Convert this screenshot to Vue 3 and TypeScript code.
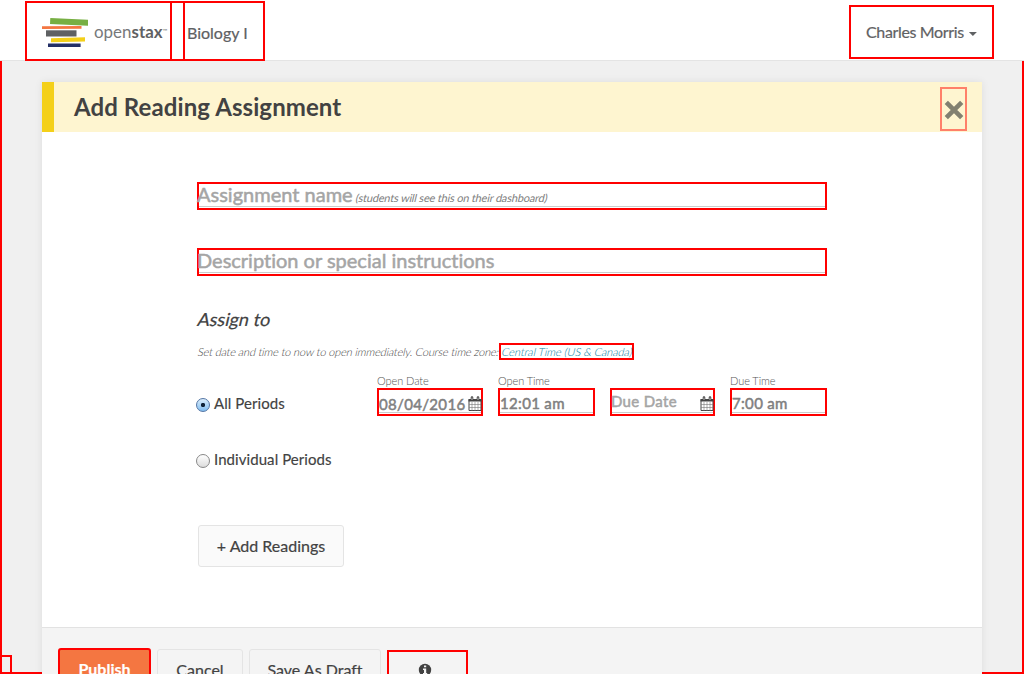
<script setup lang="ts">
interface Field {
  id: string
  label: string
  value: string
  calendar: boolean
  placeholder: boolean
}

const fields: Field[] = [
  { id: 'open-date', label: 'Open Date', value: '08/04/2016', calendar: true, placeholder: false },
  { id: 'open-time', label: 'Open Time', value: '12:01 am', calendar: false, placeholder: false },
  { id: 'due-date', label: '', value: 'Due Date', calendar: true, placeholder: true },
  { id: 'due-time', label: 'Due Time', value: '7:00 am', calendar: false, placeholder: false },
]
</script>

<template>
  <div class="app">
    <header class="navbar">
      <a class="brand outlined">
        <svg width="130" height="34" viewBox="0 0 130 34" aria-label="openstax">
          <path d="M8.300 0 46 1.800V7.800L8 6z" fill="#77af43" />
          <path d="M0 8.300 39.500 8V10.800L0 11.100z" fill="#f47641" />
          <path d="M4 12.300H34.500V18.500H4z" fill="#5f6163" />
          <path d="M9 20.300 43 19.200V23.600L9 24.300z" fill="#f4d019" />
          <path d="M6 25.400H38.600V29H6z" fill="#232f66" />
          <text x="52" y="19.500" textLength="37.500" lengthAdjust="spacingAndGlyphs" class="logo-text">open</text>
          <text x="89.500" y="19.500" textLength="31" lengthAdjust="spacingAndGlyphs" class="logo-text strong">stax</text>
          <text x="120.500" y="14.500" class="logo-tm">™</text>
        </svg>
      </a>
      <a class="course outlined"><span>Biology I</span></a>
      <a class="user outlined"><span>Charles Morris</span><i class="caret"></i></a>
    </header>

    <main class="page">
      <section class="panel">
        <div class="panel-head">
          <h1>Add Reading Assignment</h1>
          <button class="close" aria-label="Close">
            <svg width="20" height="20" viewBox="0 0 20 20">
              <path d="M2.300 2.300 17.700 17.700M17.700 2.300 2.300 17.700" stroke="#828070" stroke-width="4.600" />
            </svg>
          </button>
        </div>

        <div class="panel-body">
          <div class="text-input outlined">
            <span class="name">Assignment name</span><span class="hint slanted">(students will see this on their dashboard)</span>
          </div>
          <div class="text-input outlined second"><span class="desc">Description or special instructions</span></div>

          <h2><span class="slanted">Assign to</span></h2>
          <p class="note">
            <span class="note-text"><span class="slanted">Set date and time to now to open immediately. Course time zone:</span></span>
            <a class="zone outlined"><span class="slanted">Central Time (US &amp; Canada)</span></a>
          </p>

          <div class="period-row">
            <label class="radio all"><i class="dot checked"></i><span class="radio-text">All Periods</span></label>
            <div v-for="f in fields" :key="f.id" class="field" :class="f.id">
              <span class="field-label">{{ f.label }}</span>
              <div class="field-box outlined" :class="{ placeholder: f.placeholder }">
                <span class="value">{{ f.value }}</span>
                <svg v-if="f.calendar" class="calendar" width="14" height="16" viewBox="0 0 14 16">
                  <path d="M1 3.500H13V14.500H1z" fill="#fff" stroke="#444" />
                  <path d="M.5 3H13.500V5.500H.5z" fill="#444" />
                  <path d="M4 6V15M7 6V15M10 6V15M1 8.500H13M1 11.500H13" stroke="#777" stroke-width=".6" />
                  <path d="M4 1.500V3.500M10 1.500V3.500" stroke="#444" stroke-width="2.600" stroke-linecap="round" />
                  <path d="M4 1.500V4M10 1.500V4" stroke="#ddd" stroke-width=".8" />
                </svg>
              </div>
            </div>
          </div>

          <label class="radio individual"><i class="dot"></i><span class="radio-text">Individual Periods</span></label>
          <button class="btn add"><span>+ Add Readings</span></button>
        </div>

        <footer class="panel-foot">
          <button class="btn publish"><span>Publish</span></button>
          <button class="btn cancel"><span>Cancel</span></button>
          <button class="btn draft"><span>Save As Draft</span></button>
          <button class="info outlined" aria-label="Information">
            <svg width="14" height="14" viewBox="0 0 14 14">
              <circle cx="7" cy="7" r="6.200" fill="#424242" />
              <path d="M6 2.400H8.200V4.300H6zM5 5.600H8.200V10H9.200V11.300H5V10H6V6.900H5z" fill="#f4f4f4" />
            </svg>
          </button>
        </footer>
      </section>
      <div class="edge-box"></div>
    </main>
  </div>
</template>

<style>
html,
body {
  overflow: hidden;
}
</style>

<style scoped>
.app,
.app * {
  box-sizing: border-box;
}
.app {
  width: 1024px;
  height: 674px;
  overflow: hidden;
  display: flex;
  flex-direction: column;
  background: #f0f0f0;
  font-family: Lato, "Liberation Sans", sans-serif;
  font-variant-ligatures: none;
  color: #424242;
}
button {
  font: inherit;
  color: inherit;
  padding: 0;
}
span,
h1,
h2 {
  white-space: nowrap;
}
.outlined {
  border: 2px solid #f00;
}
.slanted {
  display: inline-block;
  transform: skewX(-13deg);
}
.navbar {
  height: 61px;
  flex: none;
  display: flex;
  padding: 1px 30px 0 25px;
  background: #fff;
  border-bottom: 1px solid #e4e4e4;
}
.brand {
  width: 160px;
  height: 60px;
  padding: 15px 0 0 15px;
}
.brand svg {
  display: block;
}
.logo-text {
  font-size: 16.500px;
  font-weight: 400;
  fill: #77797b;
}
.logo-text.strong {
  font-weight: 700;
  fill: #5f6163;
}
.logo-tm {
  font-size: 6px;
  fill: #777;
}
.course {
  width: 95px;
  height: 60px;
  margin-left: -15px;
  padding: 20px 0 0 15px;
  font-size: 16px;
  line-height: 20px;
  color: #5f6163;
  -webkit-text-stroke: 0.2px;
}
.user {
  width: 145px;
  height: 54px;
  margin: 4px 0 0 auto;
  padding: 15px 0 0 15px;
  display: flex;
  font-size: 16px;
  line-height: 20px;
  letter-spacing: -0.35px;
  color: #5f6163;
  -webkit-text-stroke: 0.2px;
}
.caret {
  margin: 10px 0 0 5px;
  width: 8px;
  height: 4px;
  background: #5f6163;
  clip-path: polygon(0 0, 100% 0, 50% 100%);
}
.page {
  position: relative;
  height: 613px;
  padding: 21px 40px 0;
  border: 2px solid #f00;
  border-top: 0;
}
.panel {
  position: relative;
  z-index: 1;
  width: 940px;
  height: 640px;
  background: #fff;
  box-shadow: 0 0 8px rgba(0, 0, 0, 0.08);
}
.edge-box {
  position: absolute;
  left: -2px;
  bottom: -2px;
  width: 14px;
  height: 19px;
  width: 14px;
  border: 2px solid #f00;
  clip-path: none;
  margin-left: -2px;
}
.panel-head {
  height: 50px;
  display: flex;
  justify-content: space-between;
  padding: 5px 15px 0 20px;
  border-left: 12px solid #f4d019;
  background: #fef5d0;
}
h1 {
  margin: 0;
  font-size: 24px;
  line-height: 40px;
  font-weight: 700;
  letter-spacing: 0.09px;
}
.close {
  width: 27px;
  height: 44px;
  border: 2px solid #ff8069;
  background: none;
  display: flex;
  justify-content: center;
  align-items: center;
}
.close svg {
  flex: none;
  margin-top: 2px;
}
.panel-body {
  height: 495px;
  padding: 50px 155px 0;
}
.text-input {
  height: 28px;
  display: flex;
  align-items: baseline;
  font-size: 20px;
  line-height: 20px;
  color: #a5a5a5;
  box-shadow: inset 0 -1px #fff, inset 0 -2px #ccc;
}
.second {
  margin-top: 38px;
}
.name,
.desc {
  margin-left: -2px;
  -webkit-text-stroke: 0.5px;
}
.hint {
  margin-left: 3px;
  font-size: 11px;
  letter-spacing: -0.18px;
  color: #808080;
}
h2 {
  margin: 31px 0 0 1px;
  font-size: 18px;
  line-height: 24px;
  font-weight: 400;
  -webkit-text-stroke: 0.2px;
}
.note {
  display: flex;
  margin: 12px 0 0;
  height: 18px;
  font-size: 11px;
  line-height: 18px;
  font-weight: 300;
  letter-spacing: -0.15px;
  color: #444;
}
.note-text {
  width: 302px;
}
.note-text .slanted {
  margin-left: 1px;
}
.zone {
  width: 135px;
  height: 17px;
  line-height: 14px;
  letter-spacing: -0.06px;
  color: #007d9f;
}
.zone span {
  margin-left: 1px;
}
.period-row {
  display: flex;
  margin-top: 13px;
}
.radio {
  display: flex;
  align-items: center;
  gap: 4px;
  margin-left: -1px;
  height: 20px;
  font-size: 15px;
  line-height: 20px;
}
.radio-text {
  margin-top: -2px;
  letter-spacing: 0.07px;
  -webkit-text-stroke: 0.15px;
}
.all {
  width: 181px;
  margin-top: 20px;
}
.dot {
  width: 14px;
  height: 14px;
  margin-top: 2px;
  flex: none;
  border: 1px solid #888;
  border-radius: 50%;
  background: linear-gradient(#fff, #ddd);
}
.dot.checked {
  border-color: #5476a5;
  background: radial-gradient(circle, #102338 0 1.8px, transparent 2.5px), linear-gradient(#dceefb, #82bdf0);
}
.field {
  display: flex;
  flex-direction: column;
}
.open-date {
  width: 106px;
}
.open-time {
  width: 97px;
  margin-left: 15px;
}
.due-date {
  width: 105px;
  margin-left: 15px;
}
.due-time {
  width: 97px;
  margin-left: 15px;
}
.field-label {
  height: 14px;
  font-size: 11px;
  line-height: 14px;
  font-weight: 300;
  letter-spacing: -0.08px;
  color: #555;
}
.field-box {
  height: 28px;
  display: flex;
  justify-content: space-between;
  font-size: 15px;
  line-height: 28px;
  letter-spacing: 0.33px;
  color: #808080;
  -webkit-text-stroke: 0.5px;
  box-shadow: inset 0 -1px #fff, inset 0 -2px #ccc;
}
.open-time .field-box,
.due-time .field-box {
  line-height: 26px;
}
.field-box.placeholder {
  line-height: 22px;
  color: #a5a5a5;
}
.placeholder .value {
  margin-left: -1px;
}
.calendar {
  margin: 6px -1px 0 0;
}
.individual {
  margin-top: 34px;
}
.btn {
  border: 1px solid #e4e4e4;
  border-radius: 3px;
  background: transparent;
  display: flex;
  justify-content: center;
  font-size: 16px;
  line-height: 20px;
  -webkit-text-stroke: 0.2px;
}
.btn.add {
  width: 146px;
  height: 42px;
  margin: 55px 0 0 1px;
  padding-top: 10px;
  background: #fafafa;
}
.panel-foot {
  height: 95px;
  display: flex;
  align-items: flex-start;
  padding: 20px 16px;
  border-top: 1px solid #e2e2e2;
  background: #f4f4f4;
}
.publish {
  width: 93px;
  height: 44px;
  padding-top: 9px;
  border: 2px solid #f00;
  background: #f47641;
  color: #fff;
  font-weight: 700;
}
.cancel {
  width: 86px;
  height: 42px;
  margin: 1px 0 0 6px;
  padding-top: 10px;
}
.draft {
  width: 132px;
  height: 42px;
  margin: 1px 0 0 6px;
  padding-top: 10px;
}
.info {
  width: 81px;
  height: 42px;
  margin: 2px 0 0 6px;
  padding-top: 11px;
  display: flex;
  justify-content: center;
  background: none;
}
.info svg {
  margin-left: -5px;
}
</style>
